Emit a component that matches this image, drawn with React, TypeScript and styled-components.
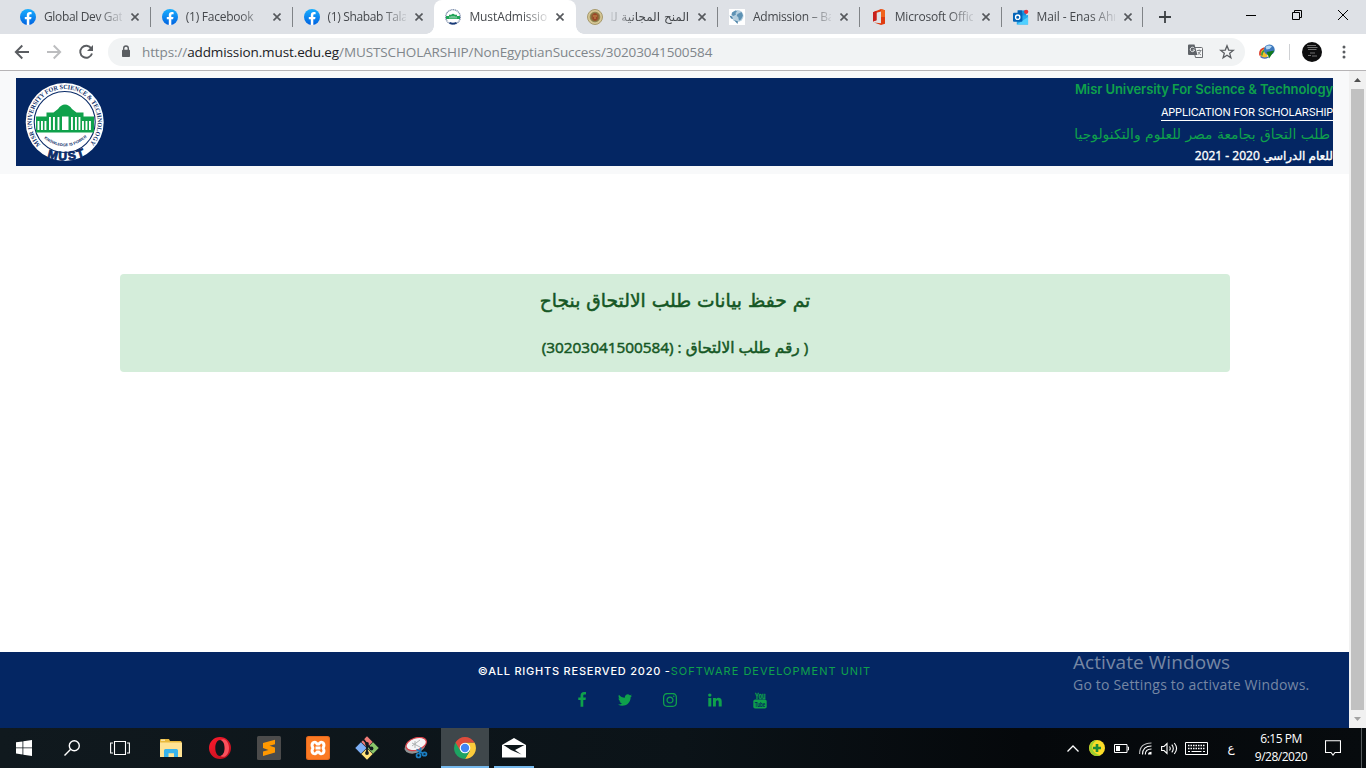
import React from "react";
import styled, { createGlobalStyle } from "styled-components";
import { FaInstagram } from "react-icons/fa";

const ui = `"Open Sans", "Noto Sans", "DejaVu Sans", sans-serif`;
const brand = `Inter, "DejaVu Sans", sans-serif`;
const arabic = `"DejaVu Sans", sans-serif`;

const Global = createGlobalStyle`
  * { box-sizing: border-box; }
  html, body { margin: 0; padding: 0; overflow: hidden; }
  svg { display: block; flex: none; }
`;

const Screen = styled.div`
  width: 1366px;
  height: 768px;
  display: flex;
  flex-direction: column;
  overflow: hidden;
  background: #fff;
  font-family: ${ui};
`;

/* ---------- Browser window ---------- */

const TabStrip = styled.div`
  height: 34px;
  flex: none;
  display: flex;
  padding-left: 9px;
  background: #dee1e6;
`;

const TabBox = styled.div<{ $active?: boolean; $divider?: boolean }>`
  width: 141.8px;
  flex: none;
  display: flex;
  align-items: center;
  padding: 0 0 0 11px;
  position: relative;
  height: 34px;
  background: ${(p) => (p.$active ? "#fff" : "transparent")};
  border-radius: ${(p) => (p.$active ? "8px 8px 0 0" : "0")};
  &::after {
    content: "";
    display: ${(p) => (p.$divider ? "block" : "none")};
    position: absolute;
    right: 0;
    top: 7px;
    width: 1px;
    height: 20px;
    background: #808387;
  }
`;

const ActiveFeet = styled.span<{ $side: "left" | "right" }>`
  position: absolute;
  bottom: 0;
  ${(p) => p.$side}: -8px;
  width: 8px;
  height: 8px;
  background: radial-gradient(
    circle at ${(p) => (p.$side === "left" ? "0 0" : "100% 0")},
    #dee1e6 7.5px,
    #fff 8px
  );
`;

const TabTitle = styled.span<{ $rtl?: boolean; $gap?: string }>`
  width: 78px;
  margin-left: 8px;
  overflow: hidden;
  white-space: nowrap;
  direction: ${(p) => (p.$rtl ? "rtl" : "ltr")};
  font-family: ${(p) => (p.$rtl ? arabic : ui)};
  font-size: 12px;
  line-height: 18px;
  letter-spacing: ${(p) => p.$gap ?? "0"};
  color: #45484c;
  mask-image: linear-gradient(
    to ${(p) => (p.$rtl ? "left" : "right")},
    #000 68%,
    rgba(0, 0, 0, 0.15) 100%
  );
`;

const TabClose = styled.span`
  margin-left: 9px;
`;

const NewTab = styled.span`
  display: flex;
  align-items: center;
  margin-left: 16px;
`;

const WindowButtons = styled.div`
  display: flex;
  margin-left: auto;
`;

const WindowButton = styled.span`
  width: 46px;
  height: 29px;
  display: flex;
  align-items: center;
  justify-content: center;
`;

const Toolbar = styled.div`
  height: 37px;
  flex: none;
  display: flex;
  align-items: center;
  padding: 0 15px 1px 14px;
  border-bottom: 1px solid #b6b4b6;
  background: #fff;
`;

const NavIcons = styled.div`
  display: flex;
  gap: 16px;
  width: 94px;
`;

const Omnibox = styled.div`
  width: 1137px;
  height: 28px;
  border-radius: 14px;
  background: #f1f3f4;
  display: flex;
  align-items: center;
  padding: 0 10px 0 13px;
`;

const Url = styled.span`
  margin-left: 11px;
  font-size: 13.5px;
  line-height: 20px;
  letter-spacing: -0.11px;
  color: #80868b;
  white-space: nowrap;
  b {
    font-weight: 400;
    color: #202124;
  }
`;

const OmniActions = styled.span`
  display: flex;
  gap: 16px;
  align-items: center;
  margin-left: auto;
`;

const Extension = styled.span`
  margin-left: 14px;
`;

const ToolDivider = styled.span`
  width: 1px;
  height: 16px;
  margin: 0 12px 0 14px;
  background: #cfd1d4;
`;

const MoreButton = styled.span`
  margin-left: auto;
`;

/* ---------- Web page ---------- */

const Viewport = styled.div`
  height: 657px;
  flex: none;
  display: flex;
`;

const Page = styled.div`
  width: 1349px;
  display: flex;
  flex-direction: column;
  position: relative;
`;

const Header = styled.header`
  height: 103px;
  flex: none;
  padding: 7px 16px 8px;
  background: #f8f9fa;
`;

const Banner = styled.div`
  height: 88px;
  display: flex;
  justify-content: space-between;
  background: #042663;
  padding-left: 9px;
`;

const BannerTitles = styled.div`
  display: flex;
  flex-direction: column;
  align-items: flex-end;
  white-space: nowrap;
`;

const UniversityName = styled.span`
  font: 600 13px/22px ${brand};
  letter-spacing: -0.08px;
  color: #0fa14b;
`;

const FormName = styled.span`
  height: 17px;
  margin-top: 5px;
  font: 400 11px/15px ${brand};
  letter-spacing: -0.22px;
  color: #fff;
  border-bottom: 1px solid #fff;
`;

const ArabicName = styled.span`
  margin-top: 2px;
  padding-right: 3px;
  font: 400 13.9px/22px ${arabic};
  color: #0fa14b;
`;

const AcademicYear = styled.span`
  font: 400 12px/22px "Open Sans", ${arabic};
  -webkit-text-stroke: 0.35px currentColor;
  color: #fff;
`;

const Alert = styled.section`
  width: 1110px;
  height: 98px;
  margin: 100px 0 0 120px;
  border-radius: 4px;
  background: #d4edda;
  color: #155724;
  display: flex;
  flex-direction: column;
  align-items: center;
  direction: rtl;
  white-space: nowrap;
`;

const AlertTitle = styled.h4`
  margin: 12px 0 0;
  font: 400 18.7px/30px ${arabic};
  -webkit-text-stroke: 0.5px currentColor;
`;

const AlertNumber = styled.p`
  margin: 16px 0 0;
  font: 400 15.35px/30px "Open Sans", ${arabic};
  -webkit-text-stroke: 0.5px currentColor;
`;

const Footer = styled.footer`
  margin-top: auto;
  height: 76px;
  background: #042663;
  display: flex;
  flex-direction: column;
  align-items: center;
`;

const Copyright = styled.p`
  margin: 10px 0 0;
  font: 500 11px/18px ${brand};
  letter-spacing: 0.77px;
  color: #fff;
  white-space: nowrap;
  span {
    font-weight: 400;
    letter-spacing: 1.01px;
    color: #0fa14b;
  }
`;

const Socials = styled.div`
  height: 16px;
  margin: 12px 9px 0 0;
  display: flex;
  color: #0fa14b;
`;

const SocialLink = styled.span<{ $nudge?: number }>`
  width: 45px;
  height: 16px;
  padding-left: ${(p) => p.$nudge ?? 0}px;
  display: flex;
  align-items: center;
  justify-content: center;
`;

const Watermark = styled.div`
  position: absolute;
  left: 1073px;
  top: 579px;
  color: #7687a4;
  white-space: nowrap;
`;

const WatermarkTitle = styled.div`
  font-size: 19px;
  line-height: 24px;
  letter-spacing: 0.07px;
`;

const WatermarkText = styled.div`
  font-size: 14px;
  line-height: 22px;
  letter-spacing: 0.2px;
`;

const Scrollbar = styled.div`
  width: 17px;
  background: #f1f1f1;
  display: flex;
  flex-direction: column;
  align-items: center;
`;

const ScrollArrow = styled.span<{ $down?: boolean }>`
  height: 18px;
  display: flex;
  align-items: center;
  color: ${(p) => (p.$down ? "#a3a3a3" : "#505050")};
  transform: ${(p) => (p.$down ? "rotate(180deg)" : "none")};
`;

const ScrollThumb = styled.span`
  width: 13px;
  height: 622px;
  background: #c1c1c1;
`;

/* ---------- Taskbar ---------- */

const Taskbar = styled.div`
  height: 40px;
  flex: none;
  display: flex;
  background: linear-gradient(90deg, #10191e 0, #0b1318 50%, #05080b 75%, #070b0e 100%);
  color: #fff;
`;

const SystemButtons = styled.div`
  display: flex;
  width: 147px;
`;

const Apps = styled.div`
  display: flex;
  gap: 1px;
`;

const TaskButton = styled.span<{ $state?: "active" | "open" }>`
  width: 48px;
  height: 40px;
  flex: none;
  display: flex;
  align-items: center;
  justify-content: center;
  background: ${(p) => (p.$state === "active" ? "#3f474b" : "transparent")};
  position: relative;
  &::after {
    content: "";
    display: ${(p) => (p.$state ? "block" : "none")};
    position: absolute;
    bottom: 0;
    left: ${(p) => (p.$state === "open" ? "4px" : "0")};
    right: ${(p) => (p.$state === "open" ? "4px" : "0")};
    height: 2px;
    background: #76b9ed;
  }
`;

const Tray = styled.div`
  margin-left: auto;
  display: flex;
  align-items: center;
`;

const TrayItem = styled.span<{ $w: number }>`
  width: ${(p) => p.$w}px;
  display: flex;
  justify-content: center;
`;

const Language = styled.span`
  width: 38px;
  text-align: center;
  font: 12px/20px ${arabic};
`;

const Clock = styled.div`
  width: 62px;
  text-align: center;
  font-size: 12px;
  line-height: 18px;
  letter-spacing: -0.5px;
  white-space: nowrap;
`;

const DesktopEdge = styled.span`
  width: 5px;
  height: 40px;
  border-left: 1px solid #555a5d;
`;

/* ---------- Icons ---------- */

const FacebookBadge = () => (
  <svg width="16" height="16" viewBox="0 0 16 16">
    <defs>
      <linearGradient id="fb" x1="0" y1="0" x2="0" y2="1">
        <stop offset="0" stopColor="#19afff" />
        <stop offset="1" stopColor="#0062e0" />
      </linearGradient>
    </defs>
    <circle cx="8" cy="8" r="8" fill="url(#fb)" />
    <path
      fill="#fff"
      d="M11.1 10.3l.4-2.3H9.3V6.4c0-.6.3-1.2 1.300-1.200h1V3.200s-.9-.2-1.800-.2C8 3 6.800 4.100 6.800 6.100V8h-2v2.300h2v5.600a8 8 0 0 0 2.500 0v-5.600z"
    />
  </svg>
);

const CloseGlyph = () => (
  <svg width="8" height="8" viewBox="0 0 8 8">
    <path d="M.5.5l7 7M7.500.5l-7 7" stroke="#55585c" strokeWidth="1.600" />
  </svg>
);

const MustFavicon = () => (
  <svg width="16" height="16" viewBox="0 0 16 16">
    <circle cx="8" cy="8" r="7.300" fill="#fff" stroke="#7d8eac" strokeWidth="1.300" strokeDasharray="1.300 .5" />
    <path d="M1 7h3V5.800h2.200Q8 3.500 9.800 5.800H12V7h3v3H1z" fill="#20a457" />
    <path d="M5 7.500v2M7 7v2.500M9 7v2.500M11 7.500v2" stroke="#fff" strokeWidth=".7" />
    <path d="M4.500 13.700q3.500 1.800 7 0" stroke="#183a78" strokeWidth="1.800" fill="none" />
  </svg>
);

const SealFavicon = () => (
  <svg width="16" height="16" viewBox="0 0 16 16">
    <circle cx="8" cy="8" r="7.500" fill="#d5c694" stroke="#a79a6e" />
    <circle cx="8" cy="8" r="4.800" fill="#8f6a38" stroke="#8b8350" />
    <path d="M5.500 6l2.500-2 2.500 2v4L8 12l-2.500-2z" fill="#9c4428" />
    <path d="M6 7h4M7 9h2" stroke="#cfae5a" strokeWidth=".8" />
  </svg>
);

const GlobeFavicon = () => (
  <svg width="16" height="16" viewBox="0 0 16 16">
    <rect width="16" height="16" fill="#fff" />
    <circle cx="8.500" cy="7" r="6" fill="#b5cfdf" />
    <path d="M3 3.500l3.500-2 1.500 1-1.500 1.500.5 1.500-2.500 1.500-2-1zM8.500 5l4-2 1.500 3.500-2 4-2 1-.8-3.500-1.500-1z" fill="#5d92b4" />
    <path d="M.5 6.500l2.500 1 1 2.500-2-.5zM5 11l4 1.500-.5 2.500z" fill="#4a80a6" />
  </svg>
);

const OfficeFavicon = () => (
  <svg width="16" height="16" viewBox="0 0 16 16">
    <path d="M10 0l4 1.300v13.400L10 16l-7-2.600 7 .8V2.500L5.500 3.700v7.500L2 12.600V3.200z" fill="#e03c10" />
    <path d="M10 0l4 1.300v6.700h-4z" fill="#f0641e" />
    <path d="M2 3.200l3.500-1.500v9.500L2 12.600z" fill="#c8201c" />
  </svg>
);

const OutlookFavicon = () => (
  <svg width="16" height="16" viewBox="0 0 17 16">
    <path d="M5 1h9v8H5z" fill="#1490df" />
    <path d="M5 1h4.500v4H5z" fill="#0a5fb0" />
    <path d="M4 7l12-1v10H4z" fill="#28a8ea" />
    <path d="M4 16l12-8v8z" fill="#50d0ff" />
    <rect y="3.500" width="10" height="9.500" rx="1" fill="#0364b8" />
    <circle cx="5" cy="8.200" r="2.300" fill="none" stroke="#fff" strokeWidth="1.400" />
    <circle cx="14" cy="2.500" r="2.300" fill="#e6353c" />
  </svg>
);

const sealNavy = "#0b2c68";

const MustLogo = () => (
  <svg width="81" height="88" viewBox="0 0 81 88">
    <defs>
      <path id="ring" d="M15.600 66.600A33 33 0 1 1 63.800 66.600" />
      <path id="motto" d="M17.500 59Q39.800 77.500 62 59" />
      <path id="must" d="M21 79Q40 86 61 78" />
    </defs>
    <circle cx="39.700" cy="44" r="39" fill="#fff" />
    <circle cx="39.700" cy="44" r="30.500" fill="#fff" stroke={sealNavy} strokeWidth="1.100" />
    <path d="M11 38.500h10.500V34.500h7l4.500-3.500q3-4.500 7-4.500t7 4.500l4.500 3.500h7v4H69V54.500H11z" fill="#0fa14b" />
    <g fill="#fff">
      {[12.5, 16, 19.5, 57, 60.5, 64].map((x) => (
        <rect key={x} x={x} y="43" width="1.900" height="9" />
      ))}
      {[24, 28, 32.5, 46, 50, 53.5].map((x) => (
        <rect key={x} x={x} y="39" width="1.900" height="13" />
      ))}
      <rect x="37" y="38.500" width="6.500" height="13.500" />
    </g>
    <text fill={sealNavy} fontFamily="Liberation Serif, serif" fontWeight="700" fontSize="6.400">
      <textPath href="#ring" textLength="151" lengthAdjust="spacingAndGlyphs">
        MISR UNIVERSITY FOR SCIENCE &amp; TECHNOLOGY
      </textPath>
    </text>
    <text fill={sealNavy} fontFamily="Liberation Sans, sans-serif" fontWeight="700" fontSize="3.900">
      <textPath href="#motto" startOffset="2" textLength="47">
        KNOWLEDGE IS POWER
      </textPath>
    </text>
    <text fill={sealNavy} fontFamily="Liberation Sans, sans-serif" fontWeight="700" fontSize="12" stroke={sealNavy} strokeWidth=".8">
      <textPath href="#must" startOffset="1" textLength="39">
        MUST
      </textPath>
    </text>
  </svg>
);

const YouTubeStack = () => (
  <svg width="14" height="17" viewBox="0 0 14 17">
    <text x="2" y="6.800" fontFamily="Liberation Sans, sans-serif" fontWeight="700" fontSize="8.500" textLength="10.500" lengthAdjust="spacingAndGlyphs" fill="currentColor" stroke="currentColor" strokeWidth=".3">
      You
    </text>
    <rect x=".3" y="7.600" width="13.400" height="9" rx="1.800" fill="currentColor" />
    <text x="1.700" y="15" fontFamily="Liberation Sans, sans-serif" fontWeight="700" fontSize="7.500" textLength="10.500" lengthAdjust="spacingAndGlyphs" fill="#042663">
      Tube
    </text>
  </svg>
);

const tabs: {
  title: string;
  icon: React.ReactNode;
  active?: boolean;
  divider?: boolean;
  rtl?: boolean;
  gap?: string;
}[] = [
  { title: "Global Dev Gateway", icon: <FacebookBadge />, divider: true, gap: "-0.35px" },
  { title: "(1) Facebook", icon: <FacebookBadge />, divider: true, gap: "-0.25px" },
  { title: "(1) Shabab Talaba", icon: <FacebookBadge />, gap: "-0.35px" },
  { title: "MustAdmission", icon: <MustFavicon />, active: true, gap: "-0.1px" },
  { title: "المنح المجانية للطلاب", icon: <SealFavicon />, divider: true, rtl: true },
  { title: "Admission – Bachelor", icon: <GlobeFavicon />, divider: true, gap: "-0.25px" },
  { title: "Microsoft Office", icon: <OfficeFavicon />, divider: true, gap: "-0.2px" },
  { title: "Mail - Enas Ahmed", icon: <OutlookFavicon />, divider: true, gap: "-0.1px" },
];

export default function App() {
  return (
    <Screen>
      <Global />
      <TabStrip>
        {tabs.map((t) => (
          <TabBox key={t.title} $active={t.active} $divider={t.divider}>
            {t.active && <ActiveFeet $side="left" />}
            {t.active && <ActiveFeet $side="right" />}
            {t.icon}
            <TabTitle $rtl={t.rtl} $gap={t.gap}>{t.title}</TabTitle>
            <TabClose><CloseGlyph /></TabClose>
          </TabBox>
        ))}
        <NewTab>
          <svg width="12" height="12" viewBox="0 0 12 12">
            <path d="M6 0v12M0 6h12" stroke="#3c4043" strokeWidth="1.800" />
          </svg>
        </NewTab>
        <WindowButtons>
          <WindowButton>
            <svg width="10" height="10"><path d="M0 5.500h10" stroke="#000" /></svg>
          </WindowButton>
          <WindowButton>
            <svg width="10" height="10" fill="none" stroke="#000">
              <path d="M.5 2.500h7v7h-7zM2.500 2.500v-2h7v7h-2" />
            </svg>
          </WindowButton>
          <WindowButton>
            <svg width="10" height="10" stroke="#000"><path d="M0 0l10 10M10 0L0 10" /></svg>
          </WindowButton>
        </WindowButtons>
      </TabStrip>

      <Toolbar>
        <NavIcons>
          <svg width="16" height="16" viewBox="0 0 16 16" fill="none" stroke="#5a5d61" strokeWidth="1.900">
            <path d="M15 8H2M8.300 1.500L1.800 8l6.500 6.500" />
          </svg>
          <svg width="16" height="16" viewBox="0 0 16 16" fill="none" stroke="#bcbdbf" strokeWidth="1.900">
            <path d="M1 8h13M7.700 1.500L14.200 8l-6.500 6.500" />
          </svg>
          <svg width="16" height="16" viewBox="0 0 16 16" fill="none" stroke="#5a5d61" strokeWidth="1.900">
            <path d="M13.300 4.500A6 6 0 1 0 14 9.500" />
            <path d="M15 1v6H9z" fill="#5a5d61" stroke="none" />
          </svg>
        </NavIcons>
        <Omnibox>
          <svg width="10" height="13" viewBox="0 0 10 13">
            <path d="M2.700 5V3.300a2.300 2.300 0 0 1 4.600 0V5" fill="none" stroke="#5a5d61" strokeWidth="1.400" />
            <rect x="1" y="4.800" width="8" height="7.200" rx=".8" fill="#5a5d61" />
          </svg>
          <Url>
            https://<b>addmission.must.edu.eg</b>/MUSTSCHOLARSHIP/NonEgyptianSuccess/30203041500584
          </Url>
          <OmniActions>
            <svg width="15" height="15" viewBox="0 0 15 15">
              <path d="M5 3.500h8.500a1 1 0 0 1 1 1v9h-7z" fill="#f6f7f8" stroke="#6a6d71" />
              <path d="M1 .5h5.500l3 10.500H1a1 1 0 0 1-1-1v-8.500a1 1 0 0 1 1-1z" fill="#5f6368" />
              <path d="M6.300 4.200A2.200 2.200 0 1 0 6.600 6H4.700" fill="none" stroke="#f1f3f4" />
              <path d="M9 6.500h4.500M11.200 5.500v1M12.700 6.500q-1 3-2.700 4M10 8q1 2 3 3" fill="none" stroke="#777a7e" strokeWidth=".9" />
            </svg>
            <svg width="16" height="16" viewBox="0 0 16 16">
              <path
                d="M8 1.800l1.700 4.300 4.600.3-3.600 2.900 1.200 4.500L8 11.300l-3.900 2.500 1.200-4.500-3.600-2.900 4.600-.3z"
                fill="none"
                stroke="#5a5d61"
                strokeWidth="1.300"
              />
            </svg>
          </OmniActions>
        </Omnibox>
        <Extension>
          <svg width="16" height="16" viewBox="0 0 16 16">
            <path d="M1 11Q-.5 5 6 3.500L9 9l-1 5Q3 15 1 11z" fill="#f0c02c" />
            <path d="M1.200 11.500Q-.2 5.500 5.500 4" fill="none" stroke="#dd3a2c" strokeWidth="1.600" />
            <path d="M3 11.500Q2.500 8 5.500 6.500" fill="none" stroke="#3a9a3c" strokeWidth="1.600" />
            <path d="M1.500 12.500q3 3 8 .5" fill="none" stroke="#4567bd" strokeWidth="1.200" />
            <circle cx="10.300" cy="5.800" r="5.400" fill="#3d78bd" />
            <path d="M6.500 3q3-2.500 6.500-.5l-2.500 2.500-3 .5z" fill="#b3d7f2" />
            <path d="M7.500 8l8-1.500L10 14.500 9 11z" fill="#137a1b" />
          </svg>
        </Extension>
        <ToolDivider />
        <svg width="20" height="20" viewBox="0 0 20 20">
          <circle cx="10" cy="10" r="10" fill="#0d0d0e" />
          <path d="M5 3.500h9M5.500 5.500h10M6 7.500h8.500M8 11h5M6 13.500h3M10 14h5" stroke="#8b8b8b" strokeWidth=".8" />
        </svg>
        <MoreButton>
          <svg width="14" height="14" viewBox="0 0 14 14" fill="#5a5d61">
            <circle cx="7" cy="2" r="1.500" /><circle cx="7" cy="7" r="1.500" /><circle cx="7" cy="12" r="1.500" />
          </svg>
        </MoreButton>
      </Toolbar>

      <Viewport>
        <Page>
          <Header>
            <Banner>
              <MustLogo />
              <BannerTitles>
                <UniversityName>Misr University For Science &amp; Technology</UniversityName>
                <FormName>APPLICATION FOR SCHOLARSHIP</FormName>
                <ArabicName dir="rtl">طلب التحاق بجامعة مصر للعلوم والتكنولوجيا</ArabicName>
                <AcademicYear>2021 - 2020 للعام الدراسي</AcademicYear>
              </BannerTitles>
            </Banner>
          </Header>
          <Alert>
            <AlertTitle>تم حفظ بيانات طلب الالتحاق بنجاح</AlertTitle>
            <AlertNumber>( رقم طلب الالتحاق : (30203041500584)</AlertNumber>
          </Alert>
          <Footer>
            <Copyright>
              ©ALL RIGHTS RESERVED 2020 -<span>SOFTWARE DEVELOPMENT UNIT</span>
            </Copyright>
            <Socials>
              <SocialLink $nudge={4}>
                <svg width="16" height="16" viewBox="128 0 1536 1792" fill="currentColor">
                  <path d="M1343 12v264h-157q-86 0-116 36t-30 108v189h293l-39 296h-254v759h-306v-759h-255v-296h255v-218q0-186 104-288.500t277-102.500q147 0 228 12z" />
                </svg>
              </SocialLink>
              <SocialLink>
                <svg width="16" height="16" viewBox="0 0 1792 1792" fill="currentColor">
                  <path d="M1684 408q-67 98-162 167 1 14 1 42 0 130-38 259.500t-115.500 248.500-184.500 210.500-258 146-323 54.500q-271 0-496-145 35 4 78 4 225 0 401-138-105-2-188-64.500t-114-159.500q33 5 61 5 43 0 85-11-112-23-185.500-111.500t-73.500-205.500v-4q68 38 146 41-66-44-105-115t-39-154q0-88 44-163 121 149 294.500 238.500t371.500 99.500q-8-38-8-74 0-134 94.500-228.500t228.500-94.500q140 0 236 102 109-21 205-78-37 115-142 178 93-10 186-50z" />
                </svg>
              </SocialLink>
              <SocialLink><FaInstagram size={16} /></SocialLink>
              <SocialLink>
                <svg width="14" height="14" viewBox="0 0 14 14" fill="currentColor">
                  <circle cx="1.800" cy="2.100" r="1.700" />
                  <path d="M.3 5h3v8.500h-3zM5 5h2.900v1.200Q8.800 4.800 10.600 4.800q3.100 0 3.100 3.700v5h-3V8.900q0-1.700-1.300-1.700-1.500 0-1.500 1.800v4.500H5z" />
                </svg>
              </SocialLink>
              <SocialLink><YouTubeStack /></SocialLink>
            </Socials>
          </Footer>
          <Watermark>
            <WatermarkTitle>Activate Windows</WatermarkTitle>
            <WatermarkText>Go to Settings to activate Windows.</WatermarkText>
          </Watermark>
        </Page>
        <Scrollbar>
          <ScrollArrow>
            <svg width="7" height="4"><path d="M0 4L3.500 0 7 4z" fill="currentColor" /></svg>
          </ScrollArrow>
          <ScrollThumb />
          <ScrollArrow $down>
            <svg width="7" height="4"><path d="M0 4L3.500 0 7 4z" fill="currentColor" /></svg>
          </ScrollArrow>
        </Scrollbar>
      </Viewport>

      <Taskbar>
        <SystemButtons>
          <TaskButton>
            <svg width="16" height="16" viewBox="0 0 16 16" fill="#fff">
              <path d="M0 2.300L6.500 1.400V7.500H0zM7.300 1.300L16 0v7.500H7.300zM0 8.300h6.500v6.200L0 13.600zM7.300 8.300H16V16l-8.700-1.300z" />
            </svg>
          </TaskButton>
          <TaskButton>
            <svg width="16" height="16" viewBox="0 0 16 16" fill="none" stroke="#fff" strokeWidth="1.400">
              <circle cx="10.300" cy="5.700" r="5" />
              <path d="M6.700 9.300L.5 15.500" />
            </svg>
          </TaskButton>
          <TaskButton>
            <svg width="20" height="14" viewBox="0 0 20 14" fill="none" stroke="#fff" strokeWidth="1.100">
              <path d="M4.500.5h11v13h-11zM3 2H.6v10H3M17 2h2.400v10H17" />
            </svg>
          </TaskButton>
        </SystemButtons>
        <Apps>
          <TaskButton>
            <svg width="22" height="18" viewBox="0 0 22 18">
              <path d="M0 1q0-1 1-1h8l1 2h10.500q1 0 1 1v15H0z" fill="#e9b93c" />
              <path d="M0 3.500h22V18H0z" fill="#ffe394" />
              <path d="M1 1.200h4" stroke="#fff6d2" />
              <path d="M4 18v-6.500q0-1.500 1.500-1.500h11q1.500 0 1.500 1.500V18h-4v-3.800H8.500V18z" fill="#37b3ec" />
            </svg>
          </TaskButton>
          <TaskButton>
            <svg width="22" height="22" viewBox="0 0 22 22">
              <defs>
                <linearGradient id="opera" x1="0" y1="0" x2="1" y2="1">
                  <stop offset="0" stopColor="#ff1b2d" />
                  <stop offset="1" stopColor="#b50e1c" />
                </linearGradient>
              </defs>
              <path fillRule="evenodd" fill="url(#opera)" d="M11 0a11 11 0 1 0 0 22 11 11 0 0 0 0-22zm0 3c2.700 0 4.700 3.500 4.700 8s-2 8-4.700 8-4.700-3.500-4.700-8 2-8 4.700-8z" />
              <path d="M11.500 3.100C16 0 20 5 20 11s-4 11-8.500 7.900c2.500-.6 4.200-3.700 4.200-7.900s-1.700-7.300-4.200-7.900z" fill="#f8515d" />
            </svg>
          </TaskButton>
          <TaskButton>
            <svg width="24" height="24" viewBox="0 0 24 24">
              <rect width="24" height="24" rx="1.500" fill="#4b4b4b" />
              <path d="M6 7l12-3.300v4.500L12.500 9.800 18 11.500v5L6 20v-4.500l5.500-1.600L6 12z" fill="#ff9800" />
            </svg>
          </TaskButton>
          <TaskButton>
            <svg width="24" height="24" viewBox="0 0 24 24">
              <rect width="24" height="24" rx="2.500" fill="#e8691c" />
              <rect x="1" y="1" width="22" height="22" rx="2" fill="#fb7a24" />
              <path
                d="M7 6.700q3-1.500 4 1.300h2q1-2.800 4-1.300 2 2.300 0 5.300 2 3 0 5.300-3 1.500-4-1.300h-2q-1 2.800-4 1.300-2-2.300 0-5.300-2-3 0-5.300zM9.500 12h5"
                fill="none"
                stroke="#fff"
                strokeWidth="2.900"
                strokeLinejoin="round"
              />
            </svg>
          </TaskButton>
          <TaskButton>
            <svg width="24" height="24" viewBox="0 0 24 24">
              <g transform="rotate(45 12 12)">
                <rect x="3.700" y="3.700" width="8" height="8" fill="#f07c78" />
                <rect x="12.300" y="3.700" width="8" height="8" fill="#8bc66a" />
                <rect x="3.700" y="12.300" width="8" height="8" fill="#7daff5" />
                <rect x="12.300" y="12.300" width="8" height="8" fill="#ffe27a" />
              </g>
              <path d="M8 3l4 5v9M12 9l4 3.500" stroke="#10191e" strokeWidth="1.800" fill="none" />
              <circle cx="12" cy="8" r="1.900" fill="#10191e" />
              <circle cx="12" cy="17" r="1.900" fill="#10191e" />
              <circle cx="16.500" cy="12.500" r="1.900" fill="#10191e" />
            </svg>
          </TaskButton>
          <TaskButton>
            <svg width="24" height="22" viewBox="0 0 24 22">
              <ellipse cx="11" cy="9.500" rx="10.700" ry="6.700" fill="#909293" transform="rotate(-18 11 9.500)" />
              <ellipse cx="12.200" cy="7" rx="10.500" ry="6" fill="#f5f5f7" stroke="#d8434b" strokeWidth="1.200" transform="rotate(-18 12.200 7)" />
              <path d="M8 9l8-6M8 6l8 4M11 4v7" stroke="#a7abad" strokeWidth=".9" />
              <g fill="none" stroke="#1b7fc4" strokeWidth="1.700">
                <circle cx="14.500" cy="18.500" r="2" />
                <ellipse cx="20.500" cy="17" rx="2" ry="1.700" />
                <path d="M15.500 16.500l1.500-6M18.500 16l-6-3.500" />
              </g>
            </svg>
          </TaskButton>
          <TaskButton $state="active">
            <svg width="22" height="22" viewBox="0 0 22 22">
              <path d="M11 5.500h9.500A11 11 0 0 1 11 22l4.800-8.300z" fill="#fccb3b" />
              <path d="M1.500 5.500A11 11 0 0 0 11 22l4.800-8.200L11 11z" fill="#1da362" />
              <path d="M11 5.500h9.500a11 11 0 0 0-19 0L6.200 13.500z" fill="#de4c3c" />
              <circle cx="11" cy="11" r="5.300" fill="#fff" />
              <circle cx="11" cy="11" r="4.200" fill="#4285f4" />
            </svg>
          </TaskButton>
          <TaskButton $state="open">
            <svg width="24" height="20" viewBox="0 0 24 20">
              <path d="M0 7L12 0l12 7v12.500H0z" fill="#fff" />
              <path d="M1.500 7h21l-9.500 5 6.500 4.500L9 12z" fill="#0d161a" />
            </svg>
          </TaskButton>
        </Apps>
        <Tray>
          <TrayItem $w={24}>
            <svg width="12" height="7" fill="none" stroke="#fff" strokeWidth="1.300"><path d="M.5 6.500L6 1l5.500 5.500" /></svg>
          </TrayItem>
          <TrayItem $w={24}>
            <svg width="16" height="16" viewBox="0 0 16 16">
              <circle cx="8" cy="8" r="8" fill="#fbdc28" />
              <path d="M2.500 13.500A8 8 0 0 1 8 0Q2 4 3.500 9t8 6.200A8 8 0 0 1 2.500 13.500z" fill="#9bd02f" />
              <path d="M8 4v8M4 8h8" stroke="#1d8a37" strokeWidth="2.600" />
            </svg>
          </TrayItem>
          <TrayItem $w={25}>
            <svg width="15" height="9" fill="none" stroke="#fff">
              <path d="M.5.5h12.500v8H.5zM13.500 3h1v3h-1" />
              <path d="M2 2h4v5H2z" fill="#fff" stroke="none" />
            </svg>
          </TrayItem>
          <TrayItem $w={23}>
            <svg width="13" height="13" viewBox="0 0 13 13" fill="none" stroke="#fff" strokeWidth="1.100">
              <path d="M.6 12Q.6 1 12.500 1" opacity=".75" />
              <path d="M3.500 12.500Q3.500 4 12.500 4" />
              <path d="M6.300 12.500Q6.300 7 12.500 7" />
              <path d="M9 12.500Q9 9.800 12.500 9.800V12.500z" fill="#fff" stroke="none" />
            </svg>
          </TrayItem>
          <TrayItem $w={24}>
            <svg width="17" height="13" viewBox="0 0 17 13" fill="none" stroke="#fff" strokeWidth="1.100">
              <path d="M.6 4.500h2.400l3-3v10l-3-3H.6zM8.500 4.500q1.500 2 0 4M10.800 2.700q3 3.800 0 7.600M13.300 1q4.500 5.500 0 11" />
            </svg>
          </TrayItem>
          <TrayItem $w={31}>
            <svg width="23" height="13" viewBox="0 0 23 13" fill="none" stroke="#fff">
              <path d="M.5.5h22v12H.5z" />
              <path d="M3 3.500h17M3 6.500h17" strokeDasharray="1.500 1" strokeWidth="1.300" />
              <path d="M3 9.500h2M6.500 9.500h10M18 9.500h2" strokeWidth="1.200" />
            </svg>
          </TrayItem>
          <Language>ع</Language>
          <Clock>
            <div>6:15 PM</div>
            <div>9/28/2020</div>
          </Clock>
          <TrayItem $w={42}>
            <svg width="16" height="16" viewBox="0 0 16 16" fill="none" stroke="#fff" strokeWidth="1.100">
              <path d="M.5.7h15v11.800H10L8 15l-2-2.500H.5z" />
            </svg>
          </TrayItem>
          <TrayItem $w={7} />
          <DesktopEdge />
        </Tray>
      </Taskbar>
    </Screen>
  );
}
